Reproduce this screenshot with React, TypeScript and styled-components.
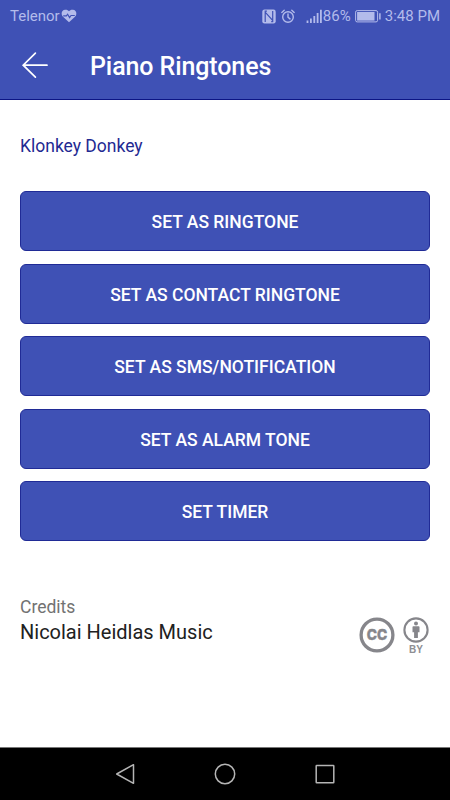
import React from 'react';
import styled, { createGlobalStyle } from 'styled-components';

const GlobalStyle = createGlobalStyle`
  * { box-sizing: border-box; }
  body { margin: 0; background: #fff; font-family: Roboto, sans-serif; }
`;

const Screen = styled.div`
  width: 450px;
  height: 800px;
  display: flex;
  flex-direction: column;
  background: #fff;
  overflow: hidden;
`;

const Header = styled.header`
  height: 100px;
  flex: none;
  background: #3f51b5;
  border-bottom: 1px solid #0c1585;
`;

const StatusBar = styled.div`
  height: 32px;
  padding: 0 10px;
  display: flex;
  align-items: center;
  justify-content: space-between;
  color: #b3bbeb;
  svg { display: block; flex: none; }
`;

const StatusGroup = styled.div`
  display: flex;
  align-items: center;
`;

const StatusText = styled.span<{ $spacing?: number }>`
  font-size: 15px;
  letter-spacing: ${(p) => p.$spacing ?? 0}px;
  line-height: 32px;
  white-space: nowrap;
`;

const TitleBar = styled.div`
  height: 67px;
  padding-left: 21px;
  display: flex;
  align-items: center;
`;

const BackButton = styled.button`
  width: 69px;
  height: 32px;
  margin-top: -2px;
  padding: 0;
  border: 0;
  background: none;
  svg { display: block; }
`;

const Title = styled.h1`
  margin: 2px 0 0;
  font-size: 25px;
  font-weight: 500;
  line-height: 32px;
  color: #fff;
  letter-spacing: -0.1px;
`;

const Content = styled.main`
  flex: 1;
  padding: 33px 20px 0;
`;

const SongName = styled.h2`
  margin: 0 0 31.4px;
  font-size: 17.5px;
  font-weight: 400;
  line-height: 27px;
  color: #1f2a92;
`;

const Actions = styled.div`
  display: grid;
  grid-auto-rows: 60px;
  row-gap: 12.5px;
`;

const ActionButton = styled.button`
  padding: 1.4px 0 0;
  border: 1px solid #202b96;
  border-radius: 6px;
  background: #3f51b5;
  color: #fff;
  font: 500 17.5px Roboto, sans-serif;
  text-transform: uppercase;
`;

const Credits = styled.section`
  margin-top: 54px;
  display: flex;
  justify-content: space-between;
`;

const CreditLabel = styled.div`
  font-size: 17.5px;
  line-height: 24px;
  color: #727272;
`;

const CreditName = styled.div`
  font-size: 20px;
  line-height: 27px;
  color: #212121;
`;

const License = styled.div`
  display: flex;
  align-items: flex-start;
  gap: 7px;
  padding-top: 22px;
  svg { display: block; }
`;

const Attribution = styled.div`
  width: 28px;
  display: flex;
  flex-direction: column;
  align-items: center;
`;

const AttributionLabel = styled.span`
  font: 700 10px/11px "Liberation Sans", sans-serif;
  color: #8e8e93;
`;

const NavBar = styled.nav`
  height: 53px;
  flex: none;
  border-top: 1px solid #777;
  background: #000;
  display: flex;
  align-items: center;
  justify-content: center;
  gap: 76px;
  svg { display: block; }
`;

const HeartIcon = () => (
  <svg width="16" height="14" viewBox="0 0 16 14">
    <path d="M8 13.2 2 7.7C-.6 4.8.8.8 4.1.7 6 .6 7.3 1.3 8 2.2 8.7 1.3 10 .6 11.9.7c3.3.1 4.7 4.1 2.1 7z" fill="#b3bbeb" />
    <path d="M2.2 6.9h3.2l1.2-1.7 2 3.4 1.4-2.1h3.8" fill="none" stroke="#3f51b5" strokeWidth="1.1" />
  </svg>
);

const NfcIcon = () => (
  <svg width="14" height="15" viewBox="0 0 14 15">
    <rect x=".3" y=".5" width="13.4" height="14" rx="2.2" fill="#b3bbeb" />
    <path d="M3.2 13V3.2L10.7 11.5V2M2.7 2.2h2.2M9.2 12.6h2" fill="none" stroke="#3f51b5" strokeWidth="1.2" />
  </svg>
);

const AlarmIcon = () => (
  <svg width="14" height="15" viewBox="0 0 14 15" fill="none" stroke="#b3bbeb" strokeWidth="1.4" strokeLinecap="round">
    <circle cx="7" cy="8" r="5.3" />
    <path d="M.8 3.4 3.2 1.2M13.2 3.4 10.8 1.2M7 5v3.2l2 1.7" />
  </svg>
);

const SignalIcon = () => (
  <svg width="17" height="15" viewBox="0 0 17 15" fill="#b3bbeb">
    <path d="M.6 11.5h1.8V14H.6zM4 9.5h1.8V14H4zM7.4 7h1.8v7H7.4zM10.7 4h1.8v10h-1.8zM14 .8h1.8V14H14z" />
  </svg>
);

const BatteryIcon = () => (
  <svg width="27" height="13" viewBox="0 0 27 13">
    <rect x=".6" y=".6" width="22" height="11.3" rx="1.6" fill="none" stroke="#b3bbeb" strokeWidth="1" />
    <rect x="2.1" y="2" width="17.4" height="8.6" fill="#b3bbeb" />
    <path d="M24.9 3.2v6.2" stroke="#b3bbeb" strokeWidth="1.5" />
  </svg>
);

const BackIcon = () => (
  <svg width="30" height="32" viewBox="0 0 30 32" fill="none" stroke="#fff" strokeWidth="1.7" strokeLinecap="round">
    <path d="M14.4 4.2 2.2 16.2l12.2 11.9M2.5 16.2H26" />
  </svg>
);

const CcIcon = () => (
  <svg width="36" height="36" viewBox="0 0 36 36">
    <circle cx="18" cy="18" r="15.9" fill="none" stroke="#86868b" strokeWidth="3.3" />
    <text x="18" y="23.4" textAnchor="middle" fontFamily="Inter, sans-serif" fontWeight="800" fontSize="15" textLength="20.5" lengthAdjust="spacingAndGlyphs" fill="#86868b" stroke="#86868b" strokeWidth=".4">CC</text>
  </svg>
);

const PersonIcon = () => (
  <svg width="26" height="27" viewBox="0 0 26 27" fill="#86868b">
    <circle cx="13" cy="13" r="11.6" fill="none" stroke="#86868b" strokeWidth="2.1" />
    <circle cx="13" cy="6.4" r="2" />
    <path d="M10.4 9.2h5.2q.9 0 .9.9v5.2h-1.6v5.8h-3.8v-5.8H9.5v-5.2q0-.9.9-.9z" />
  </svg>
);

const NavIcon = ({ children }: { children: React.ReactNode }) => (
  <svg width="24" height="24" viewBox="0 0 24 24" fill="none" stroke="#b5b5b5" strokeWidth="1.5" strokeLinejoin="round">
    {children}
  </svg>
);

const CarrierGroup = styled(StatusGroup)`
  gap: 1px;
`;

const SystemGroup = styled(StatusGroup)`
  svg:nth-of-type(1) { margin-left: -1px; }
  svg:nth-of-type(2) { margin: 0 11px 0 5px; }
  svg:nth-of-type(4) { margin: 0 3px 0 4px; }
`;

const actions = [
  'Set as ringtone',
  'Set as contact ringtone',
  'Set as SMS/notification',
  'Set as alarm tone',
  'Set timer',
];

export default function App() {
  return (
    <>
      <GlobalStyle />
      <Screen>
        <Header>
          <StatusBar>
            <CarrierGroup>
              <StatusText>Telenor</StatusText>
              <HeartIcon />
            </CarrierGroup>
            <SystemGroup>
              <NfcIcon />
              <AlarmIcon />
              <SignalIcon />
              <StatusText $spacing={0.1}>86%</StatusText>
              <BatteryIcon />
              <StatusText>3:48 PM</StatusText>
            </SystemGroup>
          </StatusBar>
          <TitleBar>
            <BackButton aria-label="Back"><BackIcon /></BackButton>
            <Title>Piano Ringtones</Title>
          </TitleBar>
        </Header>
        <Content>
          <SongName>Klonkey Donkey</SongName>
          <Actions>
            {actions.map((label) => <ActionButton key={label}>{label}</ActionButton>)}
          </Actions>
          <Credits>
            <div>
              <CreditLabel>Credits</CreditLabel>
              <CreditName>Nicolai Heidlas Music</CreditName>
            </div>
            <License>
              <CcIcon />
              <Attribution>
                <PersonIcon />
                <AttributionLabel>BY</AttributionLabel>
              </Attribution>
            </License>
          </Credits>
        </Content>
        <NavBar>
          <NavIcon><path d="M20.5 2.7v18.6L3.7 12z" /></NavIcon>
          <NavIcon><circle cx="12" cy="12" r="9.7" /></NavIcon>
          <NavIcon><rect x="3.2" y="3.4" width="17.6" height="17.4" rx=".5" /></NavIcon>
        </NavBar>
      </Screen>
    </>
  );
}
